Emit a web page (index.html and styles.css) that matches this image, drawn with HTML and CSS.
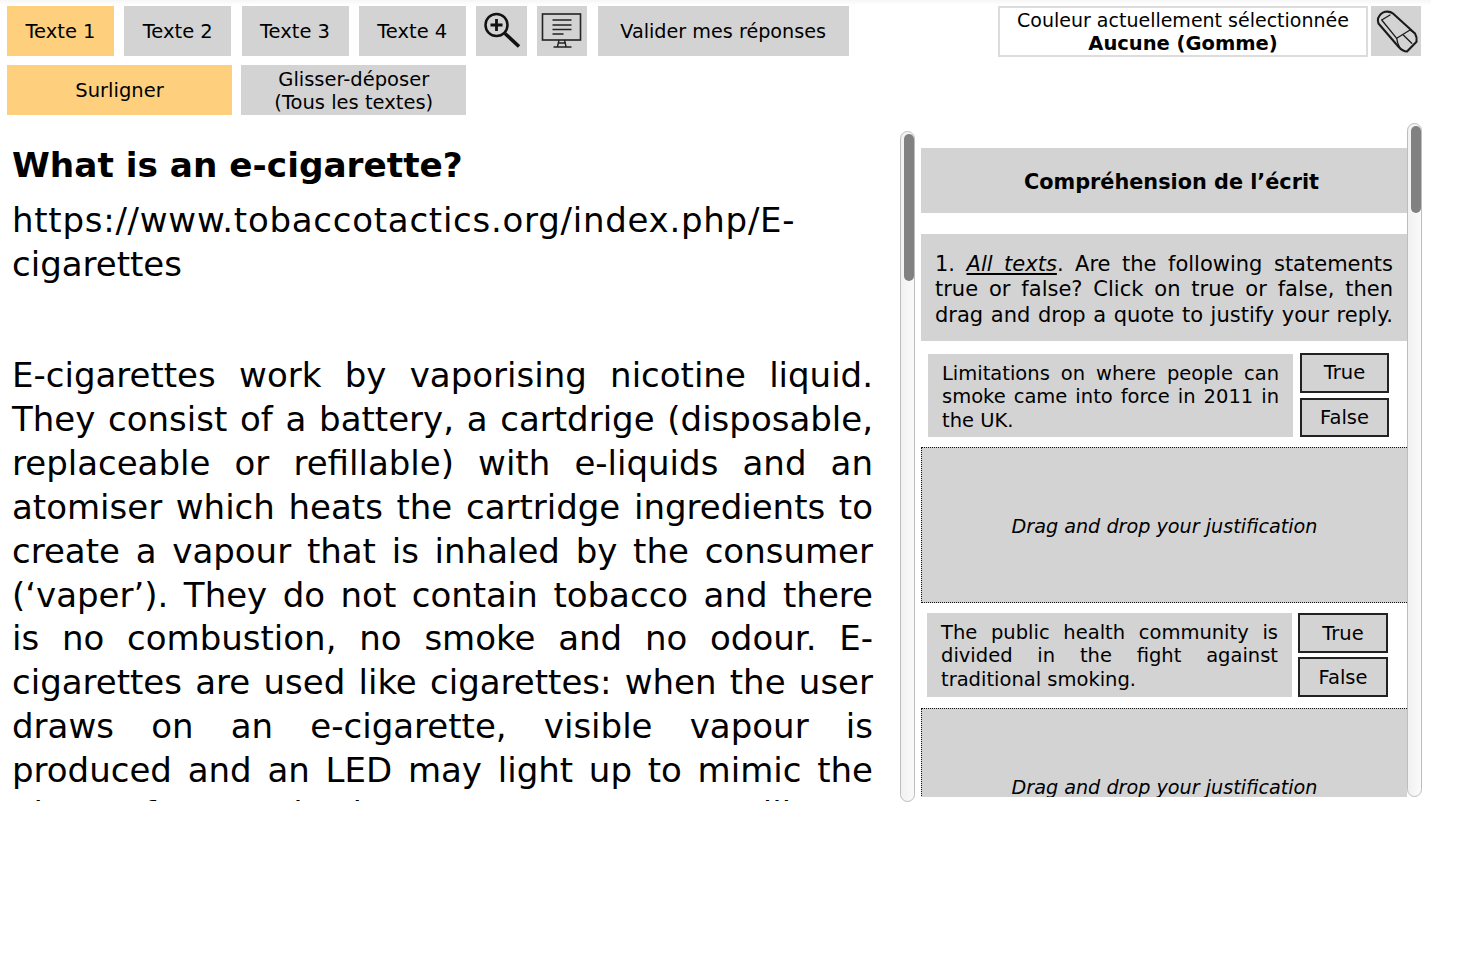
FILE: index.html
```html
<!DOCTYPE html>
<html lang="fr">
<head>
<meta charset="utf-8">
<title>Compréhension de l’écrit</title>
<link rel="stylesheet" href="styles.css">
</head>
<body>
<header class="toolbar">
  <div class="tool-rows">
    <div class="tool-row">
      <div class="btn btn-text active">Texte 1</div>
      <div class="btn btn-text">Texte 2</div>
      <div class="btn btn-text">Texte 3</div>
      <div class="btn btn-text">Texte 4</div>
      <div class="btn btn-icon">
        <svg width="40" height="40" viewBox="0 0 40 40" fill="none" stroke="#111">
          <circle cx="15.500" cy="14" r="11" stroke-width="2.500"/>
          <path d="M9.500 14h12M15.500 8v12" stroke-width="2.800"/>
          <path d="M24 22.500L38 35.500" stroke-width="3.600"/>
        </svg>
      </div>
      <div class="btn btn-icon">
        <svg width="44" height="40" viewBox="0 0 44 40" fill="none" stroke="#222">
          <rect x="2.500" y="3" width="38" height="26" stroke-width="1.600"/>
          <path d="M12.500 9h19M12.500 14h19M12.500 18.500h19M12.500 23h11" stroke-width="1.400"/>
          <path d="M19 29l-1.500 6.500M24.500 29l1.500 6.500M13.500 36h18M18 32h8" stroke-width="1.400"/>
        </svg>
      </div>
      <div class="btn btn-submit">Valider mes réponses</div>
    </div>
    <div class="tool-row">
      <div class="btn btn-mode active">Surligner</div>
      <div class="btn btn-mode btn-double">Glisser-déposer<br>(Tous les textes)</div>
    </div>
  </div>
  <div class="color-group">
    <div class="color-box"><span class="color-label">Couleur actuellement sélectionnée</span><br><strong>Aucune (Gomme)</strong></div>
    <div class="btn btn-eraser">
      <svg width="50" height="50" viewBox="0 0 50 50" fill="none" stroke="#1a1a1a" stroke-linejoin="round" stroke-linecap="round">
        <path d="M7 12.500C8.500 9 11 6.500 14 5.800C17 5.300 20 5.800 22 7.500L44 27.500C45.500 30 46 33 45.500 35.700L36 45.500C33 45.500 30 43.500 27.500 40.700L7.500 17.500C6.800 16 6.800 14 7 12.500Z" stroke-width="2.100"/>
        <path d="M10.700 14L19 9M10.700 14L25.700 32.300L39 24L44 27.500" stroke-width="1.300"/>
        <path d="M25.700 32.300C26 35.500 27 38.500 29 42M32.300 29L40.700 37.300" stroke-width="1.300"/>
      </svg>
    </div>
  </div>
</header>
<main class="columns">
  <section class="reading">
    <article class="reading-text">
      <h1>What is an e-cigarette?</h1>
      <p class="source"><span class="source-head">https://www.tobaccotactics.org/index.php/E-</span>cigarettes</p>
      <p class="body-text">E-cigarettes work by vaporising nicotine liquid. They consist of a battery, a cartdrige (disposable, replaceable or refillable) with e-liquids and an atomiser which heats the cartridge ingredients to create a vapour that is inhaled by the consumer (‘vaper’). They do not contain tobacco and there is no combustion, no smoke and no odour. E-cigarettes are used like cigarettes: when the user draws on an e-cigarette, visible vapour is produced and an LED may light up to mimic the glow of a real cigarette. However, unlike a traditional cigarette, no tobacco is burned.</p>
    </article>
    <div class="scroll-track"><div class="scroll-thumb thumb-left"></div></div>
  </section>
  <section class="questions">
    <div class="question-list">
      <h2>Compréhension de l’écrit</h2>
      <p class="prompt">1. <em class="underlined">All texts</em>. Are the following statements true or false? Click on true or false, then drag and drop a quote to justify your reply.</p>
      <div class="statement">
        <p class="statement-text">Limitations on where people can smoke came into force in 2011 in the UK.</p>
        <div class="choices">
          <div class="choice">True</div>
          <div class="choice">False</div>
        </div>
      </div>
      <div class="dropzone">Drag and drop your justification</div>
      <div class="statement statement-second">
        <p class="statement-text">The public health community is divided in the fight against traditional smoking.</p>
        <div class="choices">
          <div class="choice">True</div>
          <div class="choice">False</div>
        </div>
      </div>
      <div class="dropzone">Drag and drop your justification</div>
    </div>
    <div class="scroll-track"><div class="scroll-thumb thumb-right"></div></div>
  </section>
</main>
</body>
</html>
```

FILE: styles.css
```css
* { box-sizing: border-box; }
html, body { margin: 0; padding: 0; }
body {
  width: 1460px;
  height: 973px;
  overflow: hidden;
  background: #fff;
  color: #000;
  font-family: "DejaVu Sans", sans-serif;
}
.toolbar {
  display: flex;
  justify-content: space-between;
  width: 1431px;
  height: 123px;
  padding: 6px 10px 0 7px;
  background: linear-gradient(#f6f6f6 0, #fff 5px);
}
.tool-rows { display: flex; flex-direction: column; gap: 9px; }
.tool-row { display: flex; gap: 10.250px; }
.btn {
  display: flex;
  align-items: center;
  justify-content: center;
  height: 50px;
  background: #d3d3d3;
  font-size: 19.500px;
  line-height: 23px;
  text-align: center;
}
.btn.active { background: #fed07e; }
.btn-text { width: 107px; padding-top: 1px; }
.btn-icon { width: 50.600px; }
.btn-submit { width: 251px; padding-top: 1px; font-size: 19.200px; }
.btn-mode { width: 225px; }
.btn-mode + .btn-mode { margin-left: -1px; }
.btn-double { padding-top: 1px; }
.color-group { display: flex; gap: 3px; align-items: flex-start; }
.color-box {
  width: 370px;
  height: 51px;
  padding-top: 1px;
  border: 2px solid #dcdcdc;
  font-size: 19.500px;
  line-height: 23px;
  text-align: center;
}
.color-label { font-size: 19px; }
.btn-eraser { width: 50px; }
.columns { display: flex; align-items: flex-start; }
.reading {
  display: flex;
  width: 921px;
  height: 679px;
}
.reading-text {
  width: 900px;
  height: 670px;
  margin-top: 8px;
  padding: 0 27px 0 12px;
  overflow: hidden;
}
.reading-text h1 {
  margin: 0;
  padding-top: 14px;
  font-size: 34.300px;
  line-height: 40px;
  font-weight: bold;
}
.source {
  margin: 13px 0 0;
  font-size: 34px;
  line-height: 44px;
}
.source-head { letter-spacing: 0.740px; }
.body-text {
  margin: 68px 0 0;
  font-size: 34px;
  line-height: 43.900px;
  text-align: justify;
}
.scroll-track {
  flex: none;
  width: 15px;
  background: linear-gradient(90deg, #f1f1f1, #fafafa);
  border: 1px solid #bdbdbd;
  border-radius: 8px;
  padding: 2px 1px 2px 3px;
}
.reading .scroll-track { height: 671px; margin-top: 8px; }
.scroll-thumb { width: 9.500px; background: #818181; border-radius: 5px; }
.thumb-left { height: 147px; }
.thumb-right { height: 87px; }
.questions { display: flex; width: 501px; height: 674px; }
.questions .scroll-track { height: 674px; }
.question-list { width: 486px; height: 674px; padding-top: 25px; overflow: hidden; }
.question-list h2 {
  display: flex;
  align-items: center;
  justify-content: center;
  height: 65px;
  margin: 0 0 21px;
  padding: 2px 0 0 15px;
  background: #d3d3d3;
  font-size: 20.800px;
  font-weight: bold;
}
.prompt {
  height: 107px;
  margin: 0;
  padding: 17.500px 14px 0;
  background: #d3d3d3;
  font-size: 21px;
  line-height: 25.500px;
  text-align: justify;
  text-align-last: justify;
}
.underlined { text-decoration: underline; }
.statement {
  display: flex;
  justify-content: space-between;
  align-items: flex-start;
  padding: 12px 18px 10px 7px;
}
.statement-second { padding: 10px 19px 11px 6px; }
.statement-text {
  width: 365px;
  height: 83px;
  margin: 1px 0 0;
  padding: 8px 14px 0;
  background: #d3d3d3;
  font-size: 19.500px;
  line-height: 23.300px;
  text-align: justify;
}
.statement-second .statement-text { height: 84px; margin-top: 0; }
.choices { display: flex; flex-direction: column; gap: 5px; }
.statement-second .choices { gap: 4px; }
.choice {
  display: flex;
  align-items: center;
  justify-content: center;
  width: 89px;
  height: 39.500px;
  border: 2px solid #222;
  background: #d3d3d3;
  font-size: 19.500px;
}
.statement-second .choice { width: 90px; height: 40px; }
.dropzone {
  display: flex;
  align-items: center;
  justify-content: center;
  height: 156px;
  padding-top: 2px;
  border: 1px dotted #111;
  border-right: 0;
  background: #d3d3d3;
  font-size: 19.200px;
  font-style: italic;
}
```
